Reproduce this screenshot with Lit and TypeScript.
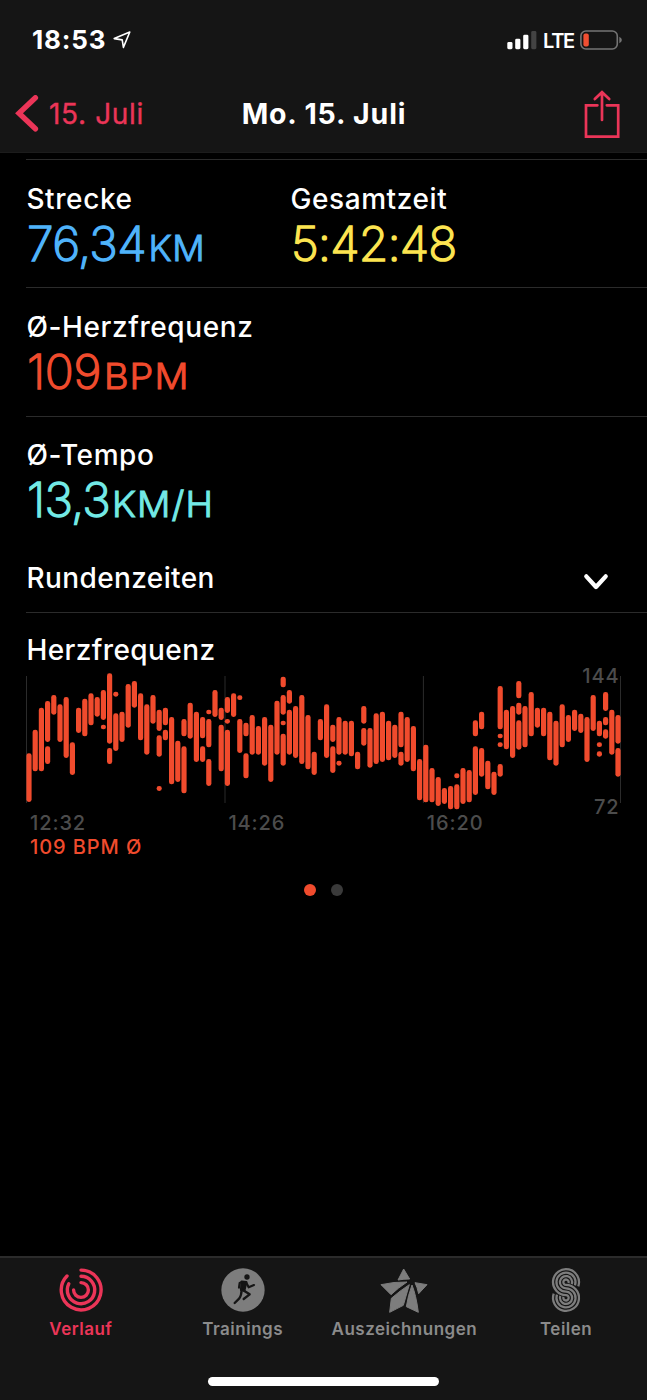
import { LitElement, html, svg, css } from "lit";
import { customElement, property } from "lit/decorators.js";

type Span = [top: number, bottom: number];

// One entry per sample; every span is a range of beats, in thirds of a pixel from the plot's top.
const SAMPLES: Span[][] = [
  [[280, 426]], [[209, 334]], [[143, 334]], [[123, 246], [259, 312]], [[105, 164]], [[133, 246]],
  [[111, 294]], [[247, 345]], [[143, 219]], [[116, 229]], [[100, 196]], [[111, 170]],
  [[90, 180], [194, 208]], [[40, 251], [264, 312]], [[95, 110], [160, 273]], [[155, 246]],
  [[72, 203]], [[63, 143]], [[100, 241]], [[133, 284]], [[105, 191]],
  [[149, 213], [226, 290], [378, 393]], [[143, 196], [209, 241]], [[171, 373]], [[242, 366]],
  [[177, 229], [259, 400]], [[128, 236]], [[155, 306]], [[171, 235], [259, 306]],
  [[149, 163], [177, 262], [297, 378]], [[90, 171]], [[143, 180], [194, 334]],
  [[111, 159], [177, 191], [209, 378]], [[100, 171]], [[106, 120], [177, 279]],
  [[188, 229], [280, 355]], [[165, 284]], [[198, 284]], [[171, 317]], [[194, 366]], [[122, 284]],
  [[50, 82], [105, 164], [182, 196], [221, 317]], [[90, 131], [149, 284]], [[138, 294]],
  [[105, 312]], [[165, 328]], [[275, 345]], [[177, 241]], [[133, 294]], [[194, 246], [259, 339]],
  [[171, 284], [302, 317]], [[182, 284]], [[182, 289]], [[275, 328]], [[138, 191], [204, 257]],
  [[204, 323]], [[160, 312]], [[155, 306]], [[182, 301]], [[194, 294]], [[155, 262], [275, 317]],
  [[171, 306]], [[198, 334]], [[297, 421]], [[254, 427]], [[324, 427]], [[351, 438]], [[384, 432]],
  [[378, 448]], [[340, 355], [373, 448]], [[324, 432]], [[330, 427]], [[181, 229], [259, 405]],
  [[155, 208], [264, 350]], [[302, 388]], [[335, 405]],
  [[78, 208], [221, 235], [247, 261], [312, 350]], [[149, 268]], [[138, 294]],
  [[63, 115], [128, 164], [181, 269]], [[138, 262]], [[96, 229]], [[143, 203]], [[143, 229]],
  [[155, 301]], [[182, 317]], [[133, 262]], [[165, 246]], [[149, 213]], [[161, 219]],
  [[171, 306]], [[105, 213]], [[182, 229], [247, 261], [274, 290]],
  [[96, 153], [171, 196], [208, 236]], [[149, 284]], [[165, 251], [264, 350]],
];

@customElement("status-bar")
class StatusBar extends LitElement {
  static styles = css`
    :host { display: flex; align-items: flex-start; height: 76px; padding: 0 25px 0 32px; box-sizing: border-box; }
    .time { font-size: 26px; font-weight: 700; line-height: 30px; margin-top: 25px; letter-spacing: 0.8px; }
    .arrow { margin: 30px 0 0 6px; }
    .signal { margin: 30px 0 0 auto; }
    .net { font-size: 20px; font-weight: 600; line-height: 24px; margin: 29px 0 0 6px; width: 32px; letter-spacing: -1.3px; }
    .battery { margin: 29px 0 0 5px; }
    svg { display: block; flex: none; }
  `;
  render() {
    return html`
      <span class="time">18:53</span>
      <svg class="arrow" width="20" height="20" viewBox="0 0 20 20">
        <path d="M2.2 8.6 17.8 2 11.4 17.4 10.2 9.9Z" fill="none" stroke="#fff" stroke-width="1.6" stroke-linejoin="round" />
      </svg>
      <svg class="signal" width="30" height="20" viewBox="0 0 30 20">
        <g fill="#fff">
          <rect x="0.3" y="12" width="5.2" height="7.2" rx="1.4" />
          <rect x="8.2" y="8.7" width="5.2" height="10.5" rx="1.4" />
          <rect x="16.2" y="4.7" width="5.2" height="14.5" rx="1.4" />
        </g>
        <rect x="24.2" y="1" width="5.2" height="18.2" rx="1.4" fill="#434343" />
      </svg>
      <span class="net">LTE</span>
      <svg class="battery" width="42" height="22" viewBox="0 0 42 22">
        <rect x="0.9" y="2" width="36.4" height="18" rx="5" fill="none" stroke="#747474" stroke-width="1.6" />
        <rect x="3.4" y="4.4" width="5.4" height="13.2" rx="2" fill="#f04f32" />
        <path d="M39.3 7.8q2.6 1.2 2.6 3.2t-2.6 3.2z" fill="#747474" />
      </svg>
    `;
  }
}

@customElement("nav-bar")
class NavBar extends LitElement {
  static styles = css`
    :host { display: grid; grid-template-columns: 1fr auto 1fr; height: 76px; line-height: 76px; font-size: 28px; }
    .back { display: flex; color: #eb3558; padding-left: 15px; letter-spacing: 0.65px; -webkit-text-stroke: 0.35px currentColor; }
    .back svg { margin: 19px 10px 0 0; }
    .title { font-size: 28.5px; font-weight: 700; letter-spacing: 0.85px; padding-left: 1px; }
    .share { justify-self: end; margin: 14px 27px 0 0; }
    svg { display: block; flex: none; }
  `;
  render() {
    return html`
      <div class="back">
        <svg width="24" height="38" viewBox="0 0 24 38">
          <path d="M20.4 2.8 4 18.3 20.4 33.8" fill="none" stroke="#eb3558" stroke-width="5.4" stroke-linecap="round" stroke-linejoin="miter" />
        </svg>
        <span>15. Juli</span>
      </div>
      <span class="title">Mo. 15. Juli</span>
      <svg class="share" width="36" height="50" viewBox="0 0 36 50">
        <g fill="none" stroke="#eb3558" stroke-width="2.7" stroke-linecap="round">
          <path d="M13.4 15.3H2V46.6H34.2V15.3H22.8" />
          <path d="M18 30V2.6M10.8 9 18 2.2 25.2 9" />
        </g>
      </svg>
    `;
  }
}

@customElement("metric-value")
class MetricValue extends LitElement {
  @property() label = "";
  @property() value = "";
  @property() unit = "";
  @property() tone = "";
  static styles = css`
    :host { display: block; }
    .label { font-size: 28px; font-weight: 500; line-height: 36px; letter-spacing: 0.6px; padding-left: 0.4px; }
    .value { font-size: 48px; font-weight: 200; line-height: 54px; padding-left: 1px; white-space: nowrap; -webkit-text-stroke: 1.5px currentColor; stroke-linejoin: round; }
    .unit { display: inline-block; font-size: 36px; font-weight: 300; line-height: 40px; transform-origin: 0 50%; margin-left: 2.5px; -webkit-text-stroke-width: 1px; }
    .distance { color: #4fb3fb; letter-spacing: -0.6px; }
    .distance .unit { letter-spacing: 0.5px; }
    .time { color: #fce450; letter-spacing: -0.9px; }
    .heart { color: #f04b2d; letter-spacing: -0.4px; }
    .heart .unit { letter-spacing: 1px; transform: scaleX(1.05); }
    .speed { color: #72e9e5; letter-spacing: -0.8px; }
    .speed .unit { letter-spacing: 1px; transform: scaleX(1.03); }
  `;
  render() {
    return html`
      <div class="label">${this.label}</div>
      <div class="value ${this.tone}">${this.value}${this.unit ? html`<span class="unit">${this.unit}</span>` : ""}</div>
    `;
  }
}

@customElement("heart-chart")
class HeartChart extends LitElement {
  static styles = css`
    :host { display: grid; grid-template-columns: 621px; grid-template-rows: 151px 24px 24px; height: 205px; margin-left: -26px; color: #4c4c4c; font-size: 20px; font-weight: 500; line-height: 24px; letter-spacing: 0.9px; }
    .plot, .scale { grid-area: 1 / 1; }
    .plot { display: block; }
    .scale { display: flex; flex-direction: column; justify-content: space-between; align-items: flex-end; height: 159px; padding: 4px 1.5px 0 0; box-sizing: border-box; }
    .times { grid-area: 2 / 1; display: grid; grid-template-columns: 198.4px 198.4px auto; padding-left: 30px; }
    .average { grid-area: 3 / 1; color: #f04b2d; padding-left: 30px; }
  `;
  render() {
    return html`
      <svg class="plot" width="622" height="151" viewBox="0 0 622 151">
        <path d="M26.5 16V143M225 16V143M423.4 16V143M620.5 16V143" stroke="#2b2b2b" />
        ${SAMPLES.map((spans, i) =>
          spans.map(
            ([top, bottom]) => svg`<rect x=${26.4 + i * 6.2} y=${top / 3} width="5.2" height=${(bottom - top) / 3} rx="2.4" fill="#f04b2d" />`,
          ),
        )}
      </svg>
      <div class="scale"><span>144</span><span>72</span></div>
      <div class="times"><span>12:32</span><span>14:26</span><span>16:20</span></div>
      <div class="average">109 BPM Ø</div>
    `;
  }
}

@customElement("tab-bar")
class TabBar extends LitElement {
  static styles = css`
    :host { display: grid; grid-template-columns: repeat(4, 1fr); grid-template-rows: 124px 20px; height: 144px; box-sizing: border-box; border-top: 2px solid #2b2b2b; background: #151515; color: #8b8b8b; font-size: 17px; font-weight: 600; line-height: 22px; letter-spacing: 0.5px; }
    .tab { display: flex; flex-direction: column; align-items: center; padding-top: 7.5px; white-space: nowrap; }
    .tab svg { display: block; margin-bottom: 4.5px; }
    .active { color: #eb3558; }
    .home { grid-column: 1 / -1; width: 231px; height: 9px; border-radius: 5px; background: #fff; margin: -5px 0 0 208px; }
  `;

  // Four parallel strands: the outermost at the top becomes the innermost at the bottom.
  private strand(r: number) {
    const q = 47 - r;
    const c = Math.cos(0.33), s = Math.sin(0.33);
    return svg`<path d="M${72 + r * c} ${45.5 + r * s}A${r} ${r} 0 1 0 72 ${45.5 + r}A${q} ${q} 0 1 1 ${72 - q * c} ${92.5 - q * s}" />`;
  }

  render() {
    return html`
      <div class="tab active">
        <svg width="48" height="48" viewBox="-24 -24 48 48" fill="none" stroke="#eb3558" stroke-width="3.4" stroke-linecap="round">
          <path d="M0 -19.9A19.9 19.9 0 1 1 -14 -14" />
          <path d="M0 -13.7A13.7 13.7 0 1 1 -12.2 -6.2" />
          <path d="M0 -7.4A7.4 7.4 0 1 1 -7.4 0" />
        </svg>
        <span>Verlauf</span>
      </div>
      <div class="tab">
        <svg width="48" height="48" viewBox="-72 -72 144 144" fill="none" stroke="#151515" stroke-width="6.5" stroke-linecap="round" stroke-linejoin="round">
          <circle r="65" fill="#7d7d7d" stroke="none" />
          <circle cx="12" cy="-39" r="8" fill="#151515" stroke="none" />
          <path d="M-4 -25 10 -24 4 2 -6 0Z" fill="#151515" />
          <path d="M-3 -24 -10 -21 -12 -7" />
          <path d="M10 -22 17 -8 33 -15" />
          <path d="M3 2 20 13 2 27" stroke-width="7" />
          <path d="M-4 0Q-5 17 -11 25L-25 39" stroke-width="7" />
        </svg>
        <span>Trainings</span>
      </div>
      <div class="tab">
        <svg width="48" height="48" viewBox="-72 -72 144 144" fill="#7d7d7d" stroke="#7d7d7d" stroke-width="3" stroke-linejoin="round">
          <path d="M-1 -63 17 -33Q0 -33 -18 -30Z" />
          <path d="M-69 -16Q-30 -25 9 -24Q-17 -7 -39 14Z" />
          <path d="M33 -22 69 -16 44 11Q40 -8 33 -22Z" />
          <path d="M16 -16 -2 46 -43 67 -38 25Q-12 2 16 -16Z" />
          <path d="M24 -15Q36 14 43 67L7 50Q12 16 24 -15Z" />
        </svg>
        <span>Auszeichnungen</span>
      </div>
      <div class="tab">
        <svg width="48" height="48" viewBox="0 -3 144 144" fill="none" stroke="#7d7d7d" stroke-width="6.8">
          ${[39, 28.7, 18.3, 8].map((r) => this.strand(r))}
        </svg>
        <span>Teilen</span>
      </div>
      <div class="home"></div>
    `;
  }
}

@customElement("app-root")
class AppRoot extends LitElement {
  static styles = css`
    :host { display: flex; flex-direction: column; width: 647px; height: 1400px; background: #000; color: #fff; font-family: Inter, "Liberation Sans", sans-serif; overflow: hidden; }
    header { background: #151515; height: 153px; box-sizing: border-box; border-bottom: 1px solid #1c1c1c; flex: none; }
    main { flex: 1; padding: 6px 0 0 26px; }
    .row { display: grid; grid-template-columns: 264px 1fr; height: 128.4px; box-sizing: border-box; border-top: 1px solid #2b2b2b; padding-top: 21px; }
    .row:nth-of-type(3) { padding-top: 20px; }
    .laps { display: flex; justify-content: space-between; height: 68.6px; box-sizing: border-box; border-bottom: 1px solid #2b2b2b; padding: 15.8px 38.5px 0 0; }
    .laps svg { margin-top: 13px; }
    .heading { font-size: 28px; font-weight: 500; line-height: 36px; letter-spacing: 0.4px; padding-left: 0.4px; }
    .chart { padding-top: 19.6px; }
    .chart heart-chart { margin-top: -8px; }
    .dots { display: flex; gap: 15.4px; padding-left: 277.5px; margin-top: 18.6px; }
    .dot { width: 12px; height: 12px; border-radius: 50%; background: #3a3a3a; }
    .on { background: #f04b2d; }
  `;
  render() {
    return html`
      <header>
        <status-bar></status-bar>
        <nav-bar></nav-bar>
      </header>
      <main>
        <section class="row">
          <metric-value label="Strecke" value="76,34" unit="KM" tone="distance"></metric-value>
          <metric-value label="Gesamtzeit" value="5:42:48" tone="time"></metric-value>
        </section>
        <section class="row">
          <metric-value label="Ø-Herzfrequenz" value="109" unit="BPM" tone="heart"></metric-value>
        </section>
        <section class="row">
          <metric-value label="Ø-Tempo" value="13,3" unit="KM/H" tone="speed"></metric-value>
        </section>
        <section class="laps">
          <span class="heading">Rundenzeiten</span>
          <svg width="26" height="20" viewBox="0 0 26 20">
            <path d="M3.3 3.4 13 14 22.7 3.4" fill="none" stroke="#fff" stroke-width="4.3" stroke-linecap="round" stroke-linejoin="round" />
          </svg>
        </section>
        <section class="chart">
          <div class="heading">Herzfrequenz</div>
          <heart-chart></heart-chart>
        </section>
        <div class="dots"><span class="dot on"></span><span class="dot"></span></div>
      </main>
      <tab-bar></tab-bar>
    `;
  }
}
